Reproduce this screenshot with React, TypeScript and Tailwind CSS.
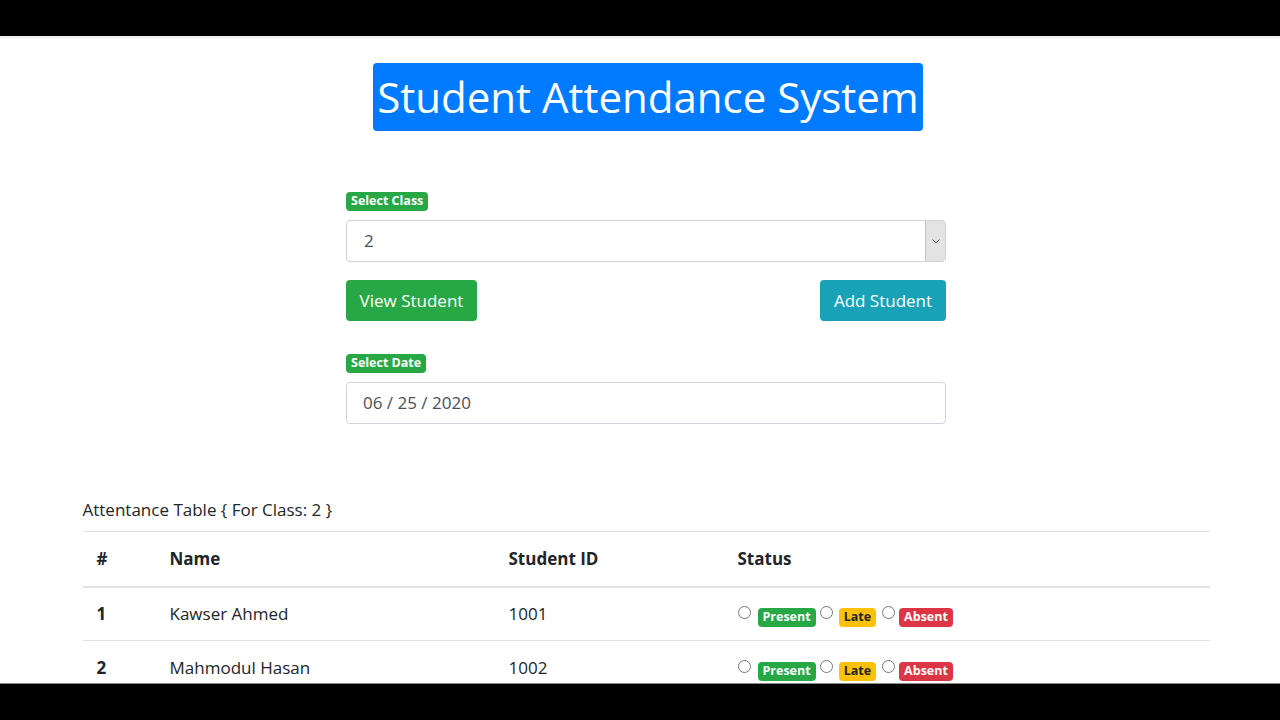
import React from 'react'

const students = [
    { id: 1, name: 'Kawser Ahmed', sid: '1001' },
    { id: 2, name: 'Mahmodul Hasan', sid: '1002' },
]

function Radio() {
    return <span className="inline-block w-[13px] h-[13px] rounded-full border border-[#767676] bg-white -translate-y-[2px]" />
}

function Badge({ children, color }: { children: React.ReactNode; color: string }) {
    return (
        <span className={`inline-flex items-center h-[19px] px-[5px] rounded-[4px] text-[12.5px] font-bold leading-none ${color}`}>
            {children}
        </span>
    )
}

export default function App() {
    return (
        <div className="h-screen flex flex-col overflow-hidden bg-black font-['Open_Sans',sans-serif] text-[#212529]">
            <div className="h-[36px] shrink-0 bg-black" />
            <div className="flex-1 bg-white overflow-hidden pl-[12px] relative">
                <div className="absolute top-0 left-0 right-0 h-[4px] bg-gradient-to-b from-[#ececec] to-white" />

                {/* title */}
                <div className="flex justify-center pt-[27px] pl-[4px]">
                    <h1 className="w-[550px] h-[68px] flex items-center justify-center bg-[#007bff] rounded-[4px] text-white text-[42px] leading-none">
                        Student Attendance System
                    </h1>
                </div>

                {/* form */}
                <div className="w-[600px] mx-auto mt-[56px]">
                    <Badge color="bg-[#28a745] text-white">Select Class</Badge>
                    <div className="mt-[9px] h-[42px] flex items-stretch border border-[#ced4da] rounded-[4px] bg-white">
                        <div className="flex-1 flex items-center pl-[17px] text-[17px] text-[#495057]">2</div>
                        <div className="w-[20px] bg-[#e3e3e3] border-l border-[#c4c4c4] flex items-center justify-center">
                            <svg width="8" height="5" viewBox="0 0 8 5" fill="none">
                                <path d="M0.5 0.5 L4 4 L7.5 0.5" stroke="#555" strokeWidth="1" />
                            </svg>
                        </div>
                    </div>

                    <div className="mt-[18px] flex justify-between">
                        <button className="h-[41px] w-[131px] rounded-[4px] bg-[#28a745] text-white text-[17px]">View Student</button>
                        <button className="h-[41px] w-[126px] rounded-[4px] bg-[#17a2b8] text-white text-[17px]">Add Student</button>
                    </div>

                    <div className="mt-[28px]">
                        <Badge color="bg-[#28a745] text-white">Select Date</Badge>
                    </div>
                    <div className="mt-[9px] h-[42px] flex items-center border border-[#ced4da] rounded-[4px] pl-[16px] text-[17px] text-[#495057]">
                        06 / 25 / 2020
                    </div>
                </div>

                {/* table */}
                <div className="w-[1127px] mx-auto mt-[73px]">
                    <p className="text-[17px] leading-[26px]">Attentance Table {'{'} For Class: 2 {'}'}</p>
                    <table className="w-full mt-[8px] border-collapse text-[17px]">
                        <thead>
                            <tr className="h-[55px] border-t border-[#dee2e6] border-b-2">
                                <th className="w-[87px] text-left pl-[14px] font-bold">#</th>
                                <th className="w-[339px] text-left font-bold">Name</th>
                                <th className="w-[229px] text-left font-bold">Student ID</th>
                                <th className="text-left font-bold">Status</th>
                            </tr>
                        </thead>
                        <tbody>
                            {students.map(s => (
                                <tr key={s.id} className="h-[54px] border-b border-[#dee2e6]">
                                    <td className="pl-[14px] font-bold">{s.id}</td>
                                    <td>{s.name}</td>
                                    <td>{s.sid}</td>
                                    <td>
                                        <div className="flex items-center pt-[2px]">
                                            <Radio />
                                            <span className="ml-[7px]"><Badge color="bg-[#28a745] text-white">Present</Badge></span>
                                            <span className="ml-[4px]"><Radio /></span>
                                            <span className="ml-[6px]"><Badge color="bg-[#ffc107] text-[#212529]">Late</Badge></span>
                                            <span className="ml-[6px]"><Radio /></span>
                                            <span className="ml-[4px]"><Badge color="bg-[#dc3545] text-white">Absent</Badge></span>
                                        </div>
                                    </td>
                                </tr>
                            ))}
                        </tbody>
                    </table>
                </div>
            </div>
            <div className="h-[37px] shrink-0 bg-black border-t border-[#888]" />
        </div>
    )
}
